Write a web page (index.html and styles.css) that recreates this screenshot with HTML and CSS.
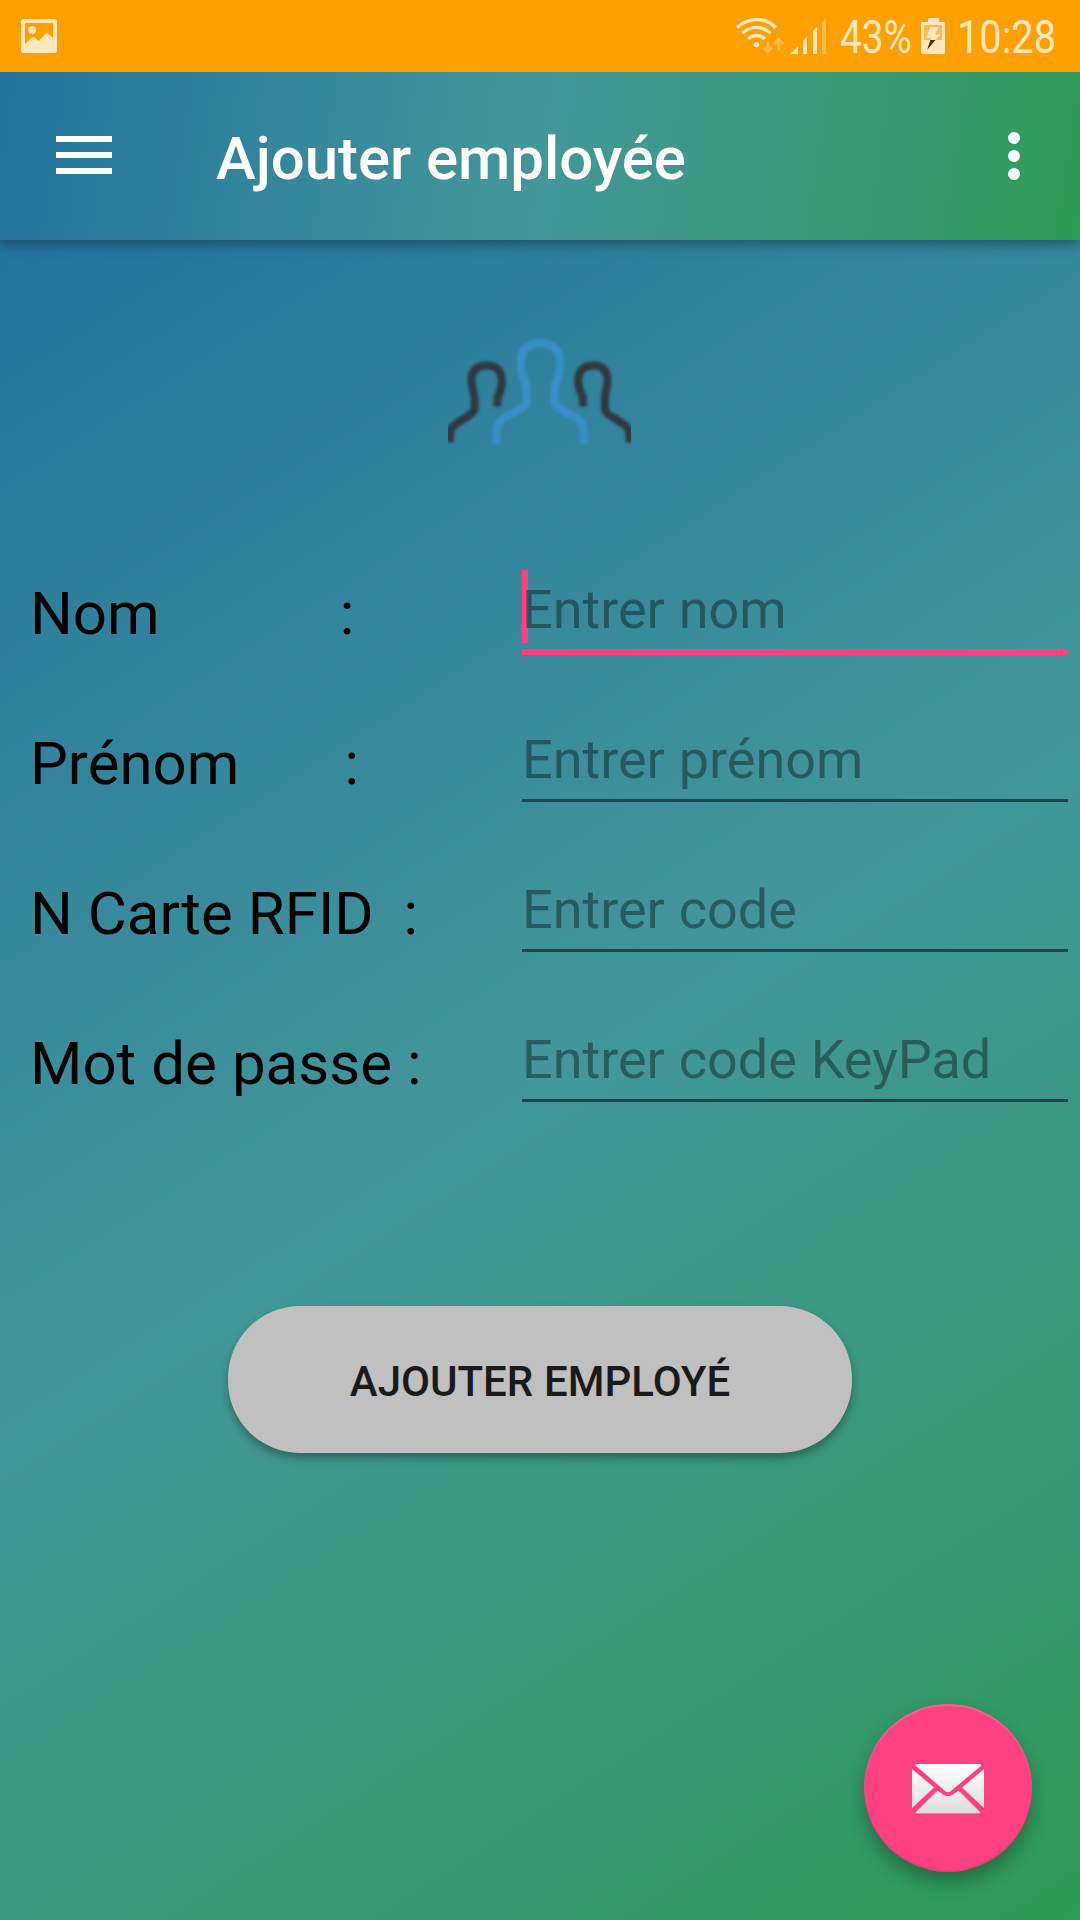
FILE: index.html
```html
<!DOCTYPE html>
<html lang="fr">
<head>
<meta charset="utf-8">
<title>Ajouter employée</title>
<link rel="stylesheet" href="styles.css">
</head>
<body>
<div class="screen">
  <div class="status-bar">
    <svg class="status-photo" width="36" height="34" viewBox="0 0 36 34">
      <path fill-rule="evenodd" d="M2.500 0H33.500Q36 0 36 2.500V31.500Q36 34 33.500 34H2.500Q0 34 0 31.500V2.500Q0 0 2.500 0ZM4 4V25L11 18.500Q12.500 17.200 14 18.500L17.500 22L24.500 15Q26 13.600 27.500 15L32 19V4Z"/>
      <circle cx="11.200" cy="11" r="4"/>
    </svg>
    <svg class="status-icons" width="344" height="72" viewBox="732 0 344 72">
      <g fill="none" stroke="#ffe6bf" stroke-width="3.400">
        <path d="M737.200 27.700A27 27 0 0 1 775.800 27.700"/>
        <path d="M742.400 33.200A20 20 0 0 1 770.600 33.200"/>
        <path d="M748 38.800A12.500 12.500 0 0 1 765 38.800"/>
      </g>
      <circle cx="756.500" cy="44.700" r="2.700" fill="#ffe6bf"/>
      <g class="dim">
        <path d="M766.300 41H769.300V48L771 46.200L773.200 48.300L767.800 53.800L762.400 48.300L764.600 46.200L766.300 48Z"/>
        <path d="M777.200 50.200H780.200V43.200L781.900 45L784.100 42.900L778.700 37.400L773.300 42.900L775.500 45L777.200 43.200Z"/>
        <path d="M822 22L826 18.500V54H822Z"/>
      </g>
      <path d="M790 54L798 46.500V54ZM803 40.500L807 37V54H803ZM813 31L817 27V54H813Z"/>
      <text x="840" y="53" font-size="46" textLength="72" lengthAdjust="spacingAndGlyphs">43%</text>
      <path d="M928 22V19.500Q928 18 929.500 18H937.500Q939 18 939 19.500V22H943.500Q945 22 945 23.500V52.500Q945 54 943.500 54H922.500Q921 54 921 52.500V23.500Q921 22 922.500 22Z"/>
      <path fill="#ffb84d" d="M924 25H942V40H924Z"/>
      <path d="M930 27H939L935 34.500H940.500L935.500 40H931V38H926Z"/>
      <path fill="#4d3000" d="M930.500 40H935.500L927 50Z"/>
      <text x="957" y="53" font-size="46" textLength="99" lengthAdjust="spacingAndGlyphs">10:28</text>
    </svg>
  </div>
  <header class="app-bar">
    <svg width="56" height="38" viewBox="0 0 56 38"><path fill="#fff" d="M0 0H56V6H0ZM0 16H56V22H0ZM0 32H56V38H0Z"/></svg>
    <h1 class="title">Ajouter employée</h1>
    <svg width="12" height="48" viewBox="0 0 12 48" fill="#fff"><circle cx="6" cy="6" r="6"/><circle cx="6" cy="24" r="6"/><circle cx="6" cy="42" r="6"/></svg>
  </header>
  <main class="content">
    <svg class="people" width="183" height="110" viewBox="448 334.500 183 110" fill="none" stroke-width="8">
      <g class="soft">
        <path stroke="#30383f" d="M497.500 406V397C501.500 389 503 383 501.500 376C499 367 494 365 486 365C478 365 473 369 471.500 377C471 386 474 391 474.500 397V409C473 414 467 416 461 420L454 425Q450 428 450 434V442"/>
        <path stroke="#30383f" d="M583 406V397C579 389 577 383 578.500 376C581 367 586 365 594 365C602 365 606 369 607.500 377C608 386 605 391 605 397V409C606 414 612 416 618 420L625 425Q629.500 428 629.500 434V442"/>
        <path stroke="#388fc9" d="M496.500 443V430C497 420 504 418 510 414C520 409 526 406 526.500 401V388C526 379 521 377 521 367V358C522 347 532 342.500 540 342.500C549 342.500 559 347 560 358V367C560 377 555 379 554.500 388V401C555 406 561 409 570 414C577 418 583 420 584 430V443"/>
      </g>
    </svg>
    <form class="form">
      <div class="row">
        <label class="label" for="nom">Nom            :</label>
        <div class="field focused"><input id="nom" class="input" placeholder="Entrer nom"></div>
      </div>
      <div class="row">
        <label class="label" for="prenom">Prénom       :</label>
        <div class="field"><input id="prenom" class="input" placeholder="Entrer prénom"></div>
      </div>
      <div class="row">
        <label class="label" for="carte">N Carte RFID  :</label>
        <div class="field"><input id="carte" class="input" placeholder="Entrer code"></div>
      </div>
      <div class="row">
        <label class="label" for="passe">Mot de passe :</label>
        <div class="field"><input id="passe" class="input" placeholder="Entrer code KeyPad"></div>
      </div>
      <button class="submit" type="button">AJOUTER EMPLOYÉ</button>
    </form>
    <button class="fab" type="button" aria-label="Message">
      <svg width="72" height="50" viewBox="0 0 72 50">
        <defs><linearGradient id="paper" gradientUnits="userSpaceOnUse" x1="0" y1="0" x2="0" y2="50"><stop offset="0" stop-color="#fff"/><stop offset="1" stop-color="#dcdcdc"/></linearGradient></defs>
        <path fill="url(#paper)" d="M3 1Q4 0 6 0H67Q69 0 69.500 1.500L39 27Q36 29.500 33 27ZM0 5L22 23.500L0 44ZM72 5V44L50 23.500ZM3.500 48.500L25.500 26.500L31 30.500Q36 34 41 30.500L46.500 26.500L68.500 48.500Q67 50 65 50H7Q5 50 3.500 48.500Z"/>
        <path stroke="#a9a0a3" stroke-width="1" d="M5 49.500H67"/>
      </svg>
    </button>
  </main>
</div>
</body>
</html>
```
FILE: styles.css
```css
* { box-sizing: border-box; }

body {
  margin: 0;
  font-family: Roboto, sans-serif;
}

.screen {
  width: 1080px;
  height: 1920px;
  display: flex;
  flex-direction: column;
  overflow: hidden;
}

.status-bar {
  height: 72px;
  flex: none;
  display: flex;
  justify-content: space-between;
  align-items: center;
  padding: 0 4px 0 21px;
  background: #ffa000;
  fill: #ffe6bf;
  z-index: 2;
}

.status-icons .dim { fill: #ffb84d; }

.app-bar {
  height: 168px;
  flex: none;
  display: flex;
  align-items: center;
  padding: 0 60px 0 56px;
  background: linear-gradient(98.840deg, #24739e, #43979a 50%, #2e9b57);
  box-shadow: 0 4px 12px rgba(0, 0, 0, .38);
  z-index: 1;
}

.app-bar svg { flex: none; margin-top: -2px; }

.app-bar svg:last-child { margin-top: 0; }

.title {
  flex: 1;
  margin: 0;
  padding: 5px 0 0 104px;
  font-size: 60px;
  line-height: 70px;
  font-weight: 500;
  letter-spacing: -.06px;
  color: #fff;
}

.content {
  flex: 1;
  position: relative;
  display: flex;
  flex-direction: column;
  align-items: center;
  padding-top: 95px;
  background: linear-gradient(147.260deg, #24739e, #43979a 50%, #2e9b57);
}

.people {
  flex: none;
  margin-right: 1px;
  overflow: hidden;
}

.soft { filter: blur(1.500px); }

.form {
  width: 100%;
  margin-top: 125px;
  display: flex;
  flex-direction: column;
  align-items: center;
}

.row {
  width: 100%;
  height: 150px;
  padding-left: 30px;
  display: grid;
  grid-template-columns: 492px 546px;
  align-items: start;
}

.label {
  margin-top: 8px;
  font-size: 60px;
  line-height: 72px;
  white-space: pre;
  word-spacing: .130px;
  color: #000;
}

.field {
  position: relative;
  height: 82px;
  padding-top: 4px;
  border-bottom: 3px solid #1f464a;
}

.field.focused {
  height: 85px;
  border-bottom: 6px solid #ff4081;
}

.field.focused::before {
  content: "";
  position: absolute;
  left: 0;
  top: 0;
  width: 6px;
  height: 73px;
  background: #ff4081;
}

.input {
  position: relative;
  display: block;
  width: 100%;
  height: 72px;
  padding: 0;
  border: 0;
  outline: 0;
  background: transparent;
  font: 54px/72px Roboto, sans-serif;
  word-spacing: .400px;
}

.input::placeholder {
  color: rgba(0, 0, 0, .38);
  opacity: 1;
}

.submit {
  width: 624px;
  height: 147px;
  margin-top: 136px;
  padding: 4px 0 0;
  border: 0;
  border-radius: 72px;
  background: #c0c0c0;
  box-shadow: 0 5px 9px rgba(0, 0, 0, .32);
  font: 500 42px/50px Roboto, sans-serif;
  word-spacing: .500px;
  color: #1a1a1a;
}

.fab {
  position: absolute;
  right: 48px;
  bottom: 48px;
  width: 168px;
  height: 168px;
  padding: 1px 0 0;
  border: 0;
  border-radius: 50%;
  display: flex;
  align-items: center;
  justify-content: center;
  background: #ff4081;
  box-shadow: 0 10px 18px rgba(0, 0, 0, .3), inset 0 2px 1px rgba(255, 255, 255, .15), inset 0 -2px 1px rgba(0, 0, 0, .06);
}
```
